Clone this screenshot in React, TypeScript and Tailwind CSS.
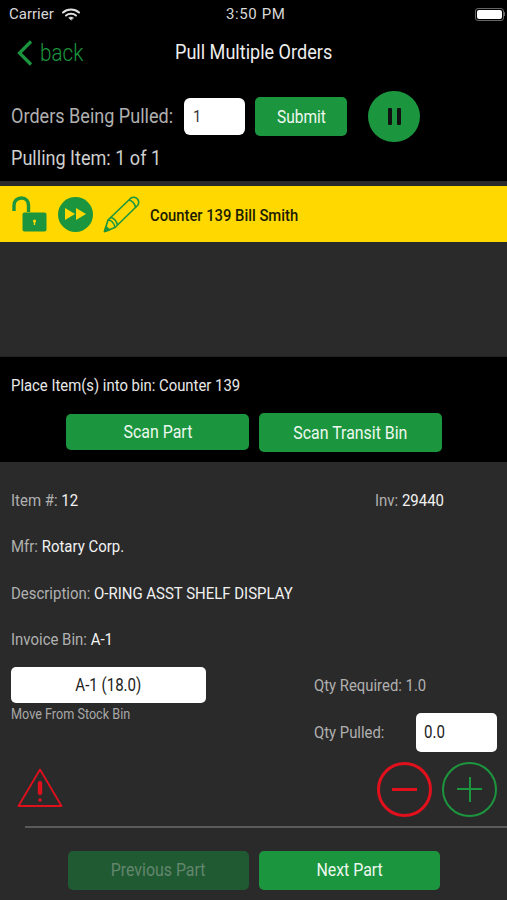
import React from "react";

const font = { fontFamily: "Roboto, sans-serif" };

// The reference type is a narrow Roboto, so squeeze the regular cut.
function Cond({ children, center }: { children: React.ReactNode; center?: boolean }) {
    return (
        <span className={`inline-block scale-x-[.86] whitespace-nowrap ${center ? "origin-center" : "origin-left"}`}>
            {children}
        </span>
    );
}

function GreenButton({ label, className }: { label: string; className: string }) {
    return (
        <button className={`flex items-center justify-center rounded-[5px] bg-[#1c963e] text-[#eef8f0] ${className}`}>
            <Cond center>{label}</Cond>
        </button>
    );
}

function Label({ name, value }: { name: string; value: string }) {
    return (
        <div className="flex h-[20px] items-center text-[17.4px] text-[#b0b0b0]">
            <Cond>
                {name} <span className="text-[#f2f2f2]">{value}</span>
            </Cond>
        </div>
    );
}

function StatusBar() {
    return (
        <div className="relative flex h-[27px] items-center justify-between pl-[9px] pr-[2px] pt-[1px] text-[15px] text-[#d8d8d8]">
            <div className="flex items-center gap-[8px]">
                <span>Carrier</span>
                <svg width="18" height="13" viewBox="0 0 18 13" fill="none" stroke="#e0e0e0" strokeLinecap="round">
                    <path d="M1 4.5C5.5 0.5 12.5 0.5 17 4.5" strokeWidth="2" />
                    <path d="M4 7.5C6.8 5.2 11.2 5.2 14 7.5" strokeWidth="2" />
                    <path d="M9 12L6.6 9.8C8 8.8 10 8.8 11.4 9.8Z" fill="#e0e0e0" strokeWidth="0.5" />
                </svg>
            </div>
            <span className="absolute left-[226px] tracking-[0.6px]">3:50 PM</span>
            <div className="flex items-center">
                <div className="h-[13px] w-[29px] rounded-[3px] border border-[#666] p-[1px]">
                    <div className="h-full w-full rounded-[2px] bg-white" />
                </div>
                <div className="h-[4px] w-[1px] bg-[#666]" />
            </div>
        </div>
    );
}

export default function App() {
    return (
        <div style={font} className="flex h-[900px] w-[507px] flex-col overflow-hidden bg-[#2a2a2a]">
            {/* Header */}
            <div className="h-[181px] bg-black">
                <StatusBar />
                <div className="relative flex h-[52px] items-center pl-[17px]">
                    <svg width="16" height="26" viewBox="0 0 16 26" fill="none" stroke="#1c963e" strokeWidth="3.2">
                        <path d="M14 1.5L2.5 13L14 24.5" />
                    </svg>
                    <span className="ml-[7px] text-[24px] font-light text-[#1c963e]"><Cond>back</Cond></span>
                    <span className="absolute left-[175px] text-[21px] text-[#eeeeee]"><Cond>Pull Multiple Orders</Cond></span>
                </div>
                <div className="flex items-center pl-[11px] pt-[12px]">
                    <span className="w-[173px] pt-[1px] text-[21px] text-[#b0b0b0]"><Cond>Orders Being Pulled:</Cond></span>
                    <div className="flex h-[37px] w-[61px] items-center rounded-[6px] bg-white pl-[9px] text-[17px] text-[#333]"><Cond>1</Cond></div>
                    <GreenButton label="Submit" className="ml-[10px] h-[39px] w-[92px] text-[18px]" />
                    <div className="ml-[21px] flex h-[51px] w-[52px] items-center justify-center rounded-full bg-[#1c963e]">
                        <div className="flex gap-[5px]">
                            <div className="h-[17px] w-[4px] rounded-[1px] bg-[#111]" />
                            <div className="h-[17px] w-[4px] rounded-[1px] bg-[#111]" />
                        </div>
                    </div>
                </div>
                <div className="pl-[11px] pt-[1px] text-[21px] text-[#cfcfcf]"><Cond>Pulling Item: 1 of 1</Cond></div>
            </div>

            {/* Order banner */}
            <div className="flex h-[63px] items-center border-t-[5px] border-b-[2px] border-t-[#2a2a2a] border-b-[#2a2a2a] bg-[#ffd800] pl-[12px]">
                <svg width="35" height="37" viewBox="0 0 35 37" fill="none">
                    <path d="M2 15V9.5C2 5 5 2 9.5 2C14 2 16.5 5 16.5 9.5V16" stroke="#1c963e" strokeWidth="3.4" />
                    <rect x="10.5" y="16.5" width="24" height="19" rx="2" fill="#1c963e" />
                    <circle cx="22.5" cy="25" r="1.6" fill="#ffd800" />
                    <rect x="21.8" y="25" width="1.4" height="4" fill="#ffd800" />
                </svg>
                <div className="ml-[11px] flex h-[35px] w-[35px] items-center justify-center rounded-full bg-[#1c963e]">
                    <svg width="22" height="14" viewBox="0 0 22 14" fill="#ffd800">
                        <path d="M0 1V13L10 7Z" />
                        <path d="M11 1V13L21 7Z" />
                    </svg>
                </div>
                <svg className="ml-[10px]" width="37" height="37" viewBox="0 0 37 37" fill="none" stroke="#1c963e" strokeWidth="1.6" strokeLinejoin="round">
                    <path d="M1.5 35.5L5 24L28 2C30 0.8 33 1.2 34.5 3C36 5 36 7.5 34.5 9.5L12 31.5Z" />
                    <path d="M5 24C8 24 11 27 12 31.5" />
                    <path d="M7.5 21.5C10.5 22 13.5 25 14.5 29" />
                    <path d="M26 4C29 4.5 32 7.5 32.5 11.5" />
                    <path d="M1.5 35.5L3 30.5L6.5 34Z" fill="#1c963e" />
                </svg>
                <span className="ml-[10px] pt-[3px] text-[17.2px] font-medium text-[#1c1c00]"><Cond>Counter 139 Bill Smith</Cond></span>
            </div>

            {/* Empty area */}
            <div className="h-[113px] border-b border-b-[#222]" />

            {/* Place into bin */}
            <div className="h-[105px] bg-black">
                <div className="mt-[19px] flex h-[20px] items-center pl-[11px] text-[17.3px] text-[#e8e8e8]"><Cond>Place Item(s) into bin: Counter 139</Cond></div>
                <div className="flex items-center pl-[66px] pt-[17px]">
                    <GreenButton label="Scan Part" className="mb-[1px] h-[36px] w-[183px] pt-[2px] text-[18.5px]" />
                    <GreenButton label="Scan Transit Bin" className="ml-[10px] h-[39px] w-[183px] pt-[2px] text-[18.5px]" />
                </div>
            </div>

            {/* Part details */}
            <div className="flex flex-1 flex-col pt-[28px]">
                <div className="flex pl-[11px]">
                    <div className="w-[364px]"><Label name="Item #:" value="12" /></div>
                    <Label name="Inv:" value="29440" />
                </div>
                <div className="flex flex-col gap-[26.5px] pl-[11px] pt-[26.5px]">
                    <Label name="Mfr:" value="Rotary Corp." />
                    <Label name="Description:" value="O-RING ASST SHELF DISPLAY" />
                    <Label name="Invoice Bin:" value="A-1" />
                </div>

                <div className="flex pl-[11px] pr-[10px] pt-[17px]">
                    <div>
                        <div className="flex h-[36px] w-[195px] items-center justify-center rounded-[5px] bg-white pt-[1px] text-[17.5px] text-[#222]"><Cond center>A-1 (18.0)</Cond></div>
                        <div className="mt-[3px] flex h-[18px] items-center text-[14.7px] text-[#a8a8a8]"><Cond>Move From Stock Bin</Cond></div>
                    </div>
                    <div className="ml-auto w-[183px]">
                        <div className="flex h-[37px] items-center pt-[2px] text-[17.3px] text-[#b0b0b0]"><Cond>Qty Required: 1.0</Cond></div>
                        <div className="mt-[9px] flex items-center justify-between">
                            <span className="pt-[2px] text-[17.3px] text-[#b0b0b0]"><Cond>Qty Pulled:</Cond></span>
                            <div className="flex h-[39px] w-[81px] items-center rounded-[5px] bg-white pl-[8px] pt-[1px] text-[17.5px] text-[#222]"><Cond>0.0</Cond></div>
                        </div>
                    </div>
                </div>

                <div className="flex items-center pl-[17px] pr-[10px] pt-[10px]">
                    <svg className="mb-[3px]" width="46" height="40" viewBox="0 0 46 40" fill="none">
                        <path d="M23 1.5L44.5 38H1.5Z" stroke="#e0101c" strokeWidth="1.8" strokeLinejoin="round" />
                        <rect x="20.8" y="13" width="4.4" height="14" rx="2" fill="#e0101c" />
                        <circle cx="23" cy="32" r="1.8" fill="#e0101c" />
                    </svg>
                    <div className="ml-auto flex gap-[10px]">
                        <div className="flex h-[55px] w-[55px] items-center justify-center rounded-full border-[3px] border-[#e0101c]">
                            <div className="h-[3px] w-[25px] bg-[#e0101c]" />
                        </div>
                        <div className="relative flex h-[55px] w-[55px] items-center justify-center rounded-full border-2 border-[#1c963e]">
                            <div className="h-[2px] w-[25px] bg-[#1c963e]" />
                            <div className="absolute h-[25px] w-[2px] bg-[#1c963e]" />
                        </div>
                    </div>
                </div>

                <div className="ml-[25px] mt-[9px] h-[2px] bg-[#5a5a5a]" />

                <div className="flex items-center pl-[68px] pt-[23px]">
                    <button className="flex h-[39px] w-[181px] items-center justify-center rounded-[5px] bg-[#1f5a32] pt-[2px] text-[18.5px] text-[#63866d]"><Cond center>Previous Part</Cond></button>
                    <GreenButton label="Next Part" className="ml-[10px] h-[39px] w-[181px] pt-[2px] text-[18.5px]" />
                </div>
            </div>
        </div>
    );
}
